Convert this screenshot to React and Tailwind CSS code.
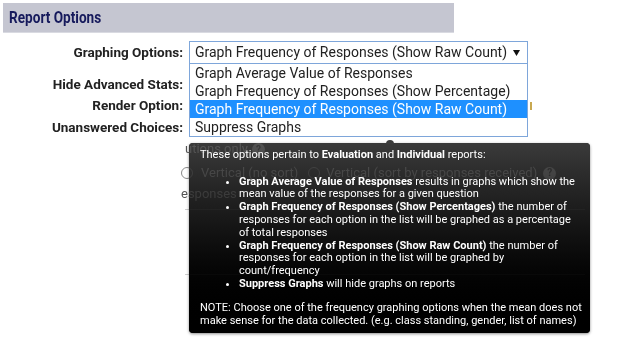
import React from "react";

function Help({ className = "" }) {
  return (
    <span className={"inline-flex items-center justify-center w-[13px] h-[13px] rounded-full bg-[#6b6b6b] text-white text-[10px] font-bold leading-none " + className}>?</span>
  );
}

function Radio({ className = "" }) {
  return <span className={"inline-block w-[12px] h-[12px] rounded-full border border-[#8a8a8a] bg-white " + className} />;
}

export default function App() {
  const font = { fontFamily: "Roboto, 'Noto Sans', Arial, sans-serif" };
  return (
    <div className="relative w-[617px] h-[343px] bg-white overflow-hidden text-[#222]" style={font}>
      {/* header */}
      <div className="pt-[3px] pl-[3px]">
        <div className="w-[451px] h-[30px] bg-[#c5c6d1] border-b border-[#d9dae1] flex items-center pl-[6px]">
          <span className="text-[17px] font-bold text-[#161a5c] scale-x-[0.8] origin-left whitespace-nowrap">Report Options</span>
        </div>
      </div>

      {/* form rows */}
      <div className="flex flex-col">
        <div className="mt-[8px] h-[23px] flex items-center">
          <div className="w-[183px] text-right text-[13.5px] font-bold whitespace-nowrap">Graphing Options:</div>
          <div className="relative ml-[6px] w-[339px] h-[23px] border border-[#7ea6da] bg-white flex items-center pl-[5px] pr-[6px]">
            <span className="text-[14px] whitespace-nowrap flex-1">Graph Frequency of Responses (Show Raw Count)</span>
            <svg width="7" height="6" viewBox="0 0 7 6" className="mr-[1px]"><path d="M0 0 L7 0 L3.5 6 Z" fill="#111" /></svg>
            {/* open list */}
            <div className="absolute left-[-1px] top-full w-[339px] bg-white border border-[#7ea6da] z-10 text-[14px] leading-[18px]">
              <div className="h-[18px] pl-[5px] whitespace-nowrap">Graph Average Value of Responses</div>
              <div className="h-[18px] pl-[5px] whitespace-nowrap">Graph Frequency of Responses (Show Percentage)</div>
              <div className="h-[18px] pl-[5px] whitespace-nowrap bg-[#1e90ff] text-white">Graph Frequency of Responses (Show Raw Count)</div>
              <div className="h-[18px] pl-[5px] whitespace-nowrap">Suppress Graphs</div>
            </div>
          </div>
        </div>
        <div className="mt-[9px] h-[22px] flex items-center">
          <div className="w-[183px] text-right text-[13.5px] font-bold whitespace-nowrap">Hide Advanced Stats:</div>
        </div>
        <div className="h-[21px] flex items-center">
          <div className="w-[183px] text-right text-[13.5px] font-bold whitespace-nowrap">Render Option:</div>
          <div className="ml-[347px] w-[2px] h-[8px] bg-[#c8a850]" />
        </div>
        <div className="h-[22px] flex items-center">
          <div className="w-[183px] text-right text-[13.5px] font-bold whitespace-nowrap">Unanswered Choices:</div>
        </div>

        {/* rows hidden under the tooltip */}
        <div className="pl-[185px] text-[13px] text-[#555]">
          <div className="h-[20px] flex items-end gap-[4px] whitespace-nowrap">
            <span>utions only</span>
            <Help className="mb-[2px]" />
          </div>
          <div className="mt-[4px] h-[22px] flex items-center whitespace-nowrap">
            <Radio className="-ml-[4px]" />
            <span className="ml-[8px]">Vertical (no sort)</span>
            <Radio className="ml-[10px]" />
            <span className="ml-[6px]">Vertical (sort by responses received)</span>
            <Help className="ml-[6px]" />
          </div>
          <div className="h-[20px] flex items-center -ml-[4px] whitespace-nowrap">esponses</div>
          <div className="mt-[5px] w-[400px] border-b border-[#cfcfcf]" />
          <div className="h-[65px] w-[400px] border-b border-[#cfcfcf]" />
        </div>
      </div>

      {/* tooltip */}
      <div className="absolute left-[189px] top-[143px] w-[401px] rounded-[4px] backdrop-invert bg-linear-to-b from-[rgba(70,70,70,0.83)] to-[rgba(0,0,0,0.93)] shadow-[0_1px_3px_rgba(0,0,0,0.45)] text-white text-[11px] leading-[12.8px] pl-[11px] pr-[8px] pt-[5.5px] pb-[6px] z-20">
        <div className="absolute -top-[3px] left-[197px] w-[8px] h-[4px] rounded-t-full bg-[#3c3c3c]" />
        <p>These options pertain to <b>Evaluation</b> and <b>Individual</b> reports:</p>
        <ul className="mt-[14.3px] pl-[39px] list-disc">
          <li><b>Graph Average Value of Responses</b> results in graphs which show the mean value of the responses for a given question</li>
          <li><b>Graph Frequency of Responses (Show Percentages)</b> the number of responses for each option in the list will be graphed as a percentage of total responses</li>
          <li><b>Graph Frequency of Responses (Show Raw Count)</b> the number of responses for each option in the list will be graphed by count/frequency</li>
          <li><b>Suppress Graphs</b> will hide graphs on reports</li>
        </ul>
        <p className="mt-[11px]">NOTE: Choose one of the frequency graphing options when the mean does not make sense for the data collected. (e.g. class standing, gender, list of names)</p>
      </div>
    </div>
  );
}
